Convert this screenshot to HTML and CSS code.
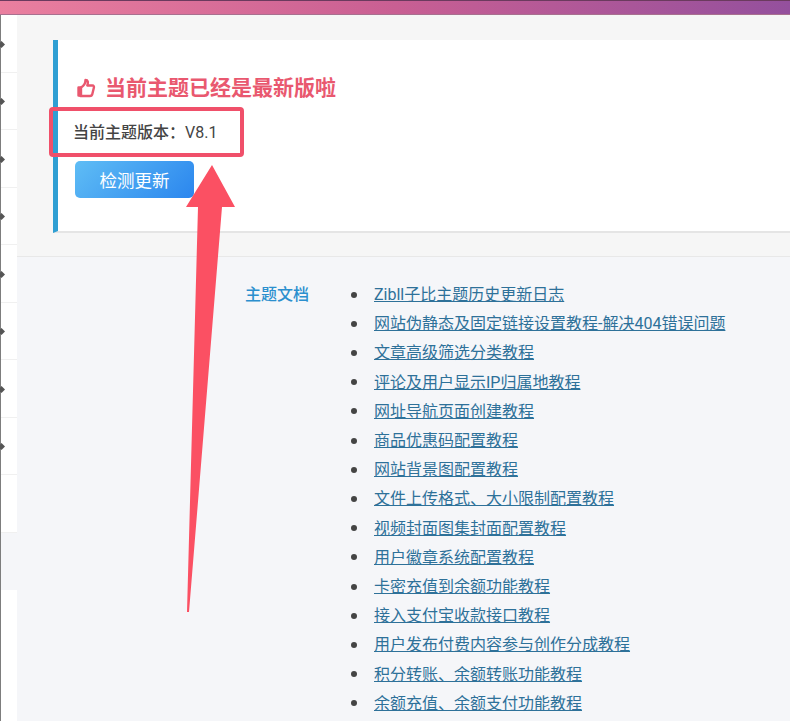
FILE: index.html
```html
<!DOCTYPE html>
<html lang="zh-CN">
<head>
    <meta charset="UTF-8">
    <title>主题更新</title>
    <link rel="stylesheet" href="styles.css">
</head>
<body>
    <div class="top-bar"></div>
    <div class="layout">
        <div class="side-menu">
            <div class="side-item"><span class="side-dot"></span></div>
            <div class="side-item"><span class="side-dot"></span></div>
            <div class="side-item"><span class="side-dot"></span></div>
            <div class="side-item"><span class="side-dot"></span></div>
            <div class="side-item"><span class="side-dot"></span></div>
            <div class="side-item"><span class="side-dot"></span></div>
            <div class="side-item"><span class="side-dot"></span></div>
            <div class="side-item"><span class="side-dot"></span></div>
            <div class="side-item"></div>
            <div class="side-item side-active"></div>
            <div class="side-rest"></div>
        </div>
        <div class="main">
            <div class="update-section">
                <div class="notice">
                    <h2 class="notice-title">
                        <svg class="thumb-icon" viewBox="0 0 20 20" width="20" height="20" fill="none" stroke="#e9586f" stroke-width="2.400" stroke-linejoin="round" stroke-linecap="round">
                            <path d="M2.500 9.500h2.500v8h-2.500z" fill="#e9586f"/>
                            <path d="M5 9.500c2.500-1.500 4.500-4 4.500-7.500 2.500 0 3 2.500 1.800 5.500h5c1.500 0 2 1.200 1.500 2.500l-1.600 6.500c-.4 1.200-1 1.500-2.200 1.500h-9.500"/>
                        </svg>
                        当前主题已经是最新版啦
                    </h2>
                    <p class="notice-version">当前主题版本：<span class="version-num">V8.1</span></p>
                    <button type="button" class="check-btn">检测更新</button>
                </div>
            </div>
            <div class="docs-section">
                <div class="docs-label">主题文档</div>
                <ul class="docs-list">
                    <li><a href="#">Zibll子比主题历史更新日志</a></li>
                    <li><a href="#">网站伪静态及固定链接设置教程-解决404错误问题</a></li>
                    <li><a href="#">文章高级筛选分类教程</a></li>
                    <li><a href="#">评论及用户显示IP归属地教程</a></li>
                    <li><a href="#">网址导航页面创建教程</a></li>
                    <li><a href="#">商品优惠码配置教程</a></li>
                    <li><a href="#">网站背景图配置教程</a></li>
                    <li><a href="#">文件上传格式、大小限制配置教程</a></li>
                    <li><a href="#">视频封面图集封面配置教程</a></li>
                    <li><a href="#">用户徽章系统配置教程</a></li>
                    <li><a href="#">卡密充值到余额功能教程</a></li>
                    <li><a href="#">接入支付宝收款接口教程</a></li>
                    <li><a href="#">用户发布付费内容参与创作分成教程</a></li>
                    <li><a href="#">积分转账、余额转账功能教程</a></li>
                    <li><a href="#">余额充值、余额支付功能教程</a></li>
                </ul>
            </div>
        </div>
    </div>
    <div class="mark-box"></div>
    <svg class="mark-arrow" viewBox="0 0 790 721" width="790" height="721">
        <polygon points="212,165 235,207 222,207 189,612 187,612 198,207 186,207" fill="#fb5063"/>
    </svg>
</body>
</html>
```

FILE: styles.css
```css
html, body {
    margin: 0;
    padding: 0;
}
body {
    width: 790px;
    height: 721px;
    overflow: hidden;
    position: relative;
    font-family: Roboto, "Noto Sans CJK SC", sans-serif;
    background-color: #f5f6f9;
    color: #3c434a;
}
.top-bar {
    height: 15px;
    box-sizing: border-box;
    border-top: 1px solid #6b3a5e;
    border-bottom: 1px solid #a8708f;
    background: linear-gradient(90deg, #ea7f9f 0%, #c95f93 50%, #94509d 100%);
}
.layout {
    display: flex;
    height: 706px;
}
.side-menu {
    width: 17px;
    flex: none;
    box-sizing: border-box;
    border-left: 1px solid #7d7d7d;
    background: #fff;
    display: flex;
    flex-direction: column;
}
.side-item {
    height: 57.500px;
    box-sizing: border-box;
    padding-top: 2px;
    border-bottom: 1px solid #f0f0f0;
    display: flex;
    align-items: center;
}
.side-dot {
    width: 5px;
    height: 5px;
    margin-left: -2px;
    background: #555;
    transform: rotate(45deg);
}
.side-active {
    background: #f5f6f9;
    border-bottom: none;
}
.side-rest {
    flex: 1;
}
.main {
    flex: 1;
    min-width: 0;
}
.update-section {
    height: 242px;
    box-sizing: border-box;
    padding: 25px 0 0 36px;
    background: #f6f6f6;
    border-bottom: 1px solid #e8e8e8;
}
.notice {
    height: 193px;
    box-sizing: border-box;
    padding: 33px 0 0 17px;
    background: #fff;
    border-left: 5px solid #2f9fd3;
    border-bottom: 2px solid #e5e5e5;
}
.notice-title {
    margin: 0 0 0 1px;
    display: flex;
    align-items: center;
    gap: 9px;
    font-size: 21px;
    line-height: 30px;
    font-weight: bold;
    color: #e9586f;
}
.thumb-icon {
    flex: none;
}
.notice-version {
    margin: 20px 0 0 -2px;
    font-size: 16px;
    line-height: 20px;
    font-weight: 500;
    color: #444;
}
.version-num {
    font-weight: 400;
}
.check-btn {
    display: block;
    margin-top: 18px;
    width: 119px;
    height: 37px;
    border: none;
    border-radius: 5px;
    background: linear-gradient(135deg, #5fbdf5, #2b86ee);
    color: #fff;
    font-family: inherit;
    font-size: 17.500px;
}
.docs-section {
    display: flex;
    padding: 23px 0 0 228px;
}
.docs-label {
    width: 106px;
    flex: none;
    font-size: 16px;
    line-height: 29.200px;
    font-weight: 500;
    color: #2b8fce;
}
.docs-list {
    margin: 0;
    padding: 0;
    list-style: none;
    font-size: 16px;
    line-height: 29.200px;
}
.docs-list li {
    display: flex;
    align-items: center;
    gap: 17px;
}
.docs-list li::before {
    content: "";
    width: 6px;
    height: 6px;
    border-radius: 50%;
    background: #444;
}
.docs-list a {
    color: #2e7199;
    text-decoration: underline;
}
.mark-box {
    position: absolute;
    left: 49px;
    top: 107px;
    width: 195px;
    height: 50px;
    box-sizing: border-box;
    border: 4px solid #f0506a;
    border-radius: 4px;
}
.mark-arrow {
    position: absolute;
    left: 0;
    top: 0;
}
```
